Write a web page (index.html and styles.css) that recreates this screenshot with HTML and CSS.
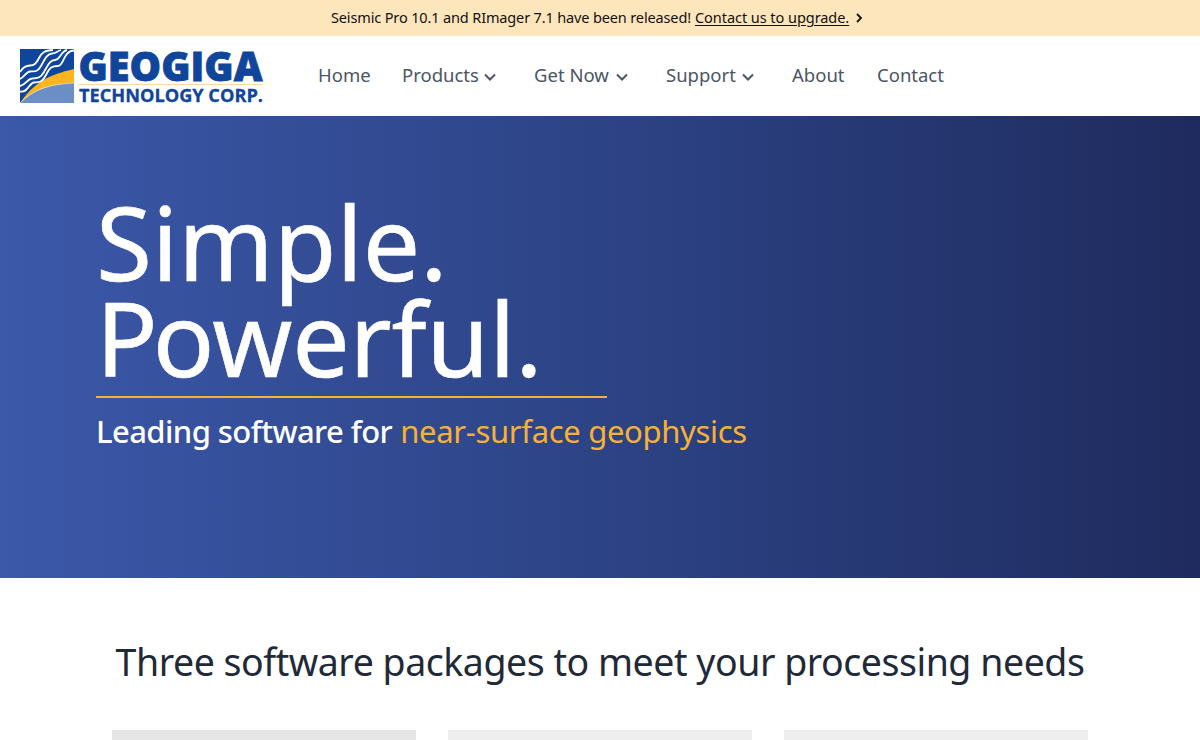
FILE: index.html
```html
<!DOCTYPE html>
<html lang="en">
<head>
    <meta charset="UTF-8">
    <meta name="viewport" content="width=device-width, initial-scale=1.0">
    <title>Geogiga Technology Corp.</title>
    <link rel="stylesheet" href="styles.css">
</head>
<body>
    <div class="banner">
        <span class="banner-text">Seismic Pro 10.1 and RImager 7.1 have been released!</span>
        <a class="banner-link" href="#">Contact us to upgrade.</a>
        <svg class="banner-arrow" viewBox="0 0 8 10" width="8" height="10"><path d="M2 1l4 4-4 4"/></svg>
    </div>

    <header class="header">
        <a class="logo" href="#">
            <svg class="logo-svg" width="248" height="60" viewBox="0 0 248 60">
                <rect x="2" y="3" width="54" height="54" fill="#10459c"/>
                <path d="M2 57C16 43 32 38 56 37V57Z" fill="#6b8fc4"/>
                <path d="M2 57C16 37 30 29 56 23V37C33 38 17 43 2 57Z" fill="#fdb51e"/>
                <path d="M2 57C16 43 32 38 56 37" fill="none" stroke="#dfe4dc" stroke-width="0.8"/>
                <g class="waves">
                    <path d="M2 26C5 21 8 19.5 12 19.5S18 18 21 12S27 4.5 35 4"/>
                    <path d="M2 33C6 31 8 26 12 25.5S19 27 23 20S29 8 34 7.5S39 5 43 4"/>
                    <path d="M2 40C8 39 9 33 14 32.5S22 33 26 26S32 14 37 14S43 5 49 4"/>
                    <path d="M2 45.5C10 47 11 37 16 36.5S24 37 28 29S34 20 40 20S45 5 56 4.5"/>
                </g>
                <path d="M60 38.5H245" stroke="#fbd9a0" stroke-width="1.2"/>
                <text class="logo-name" x="60.5" y="34.5" textLength="184" lengthAdjust="spacingAndGlyphs">GEOGIGA</text>
                <text class="logo-sub" x="61" y="56" textLength="184" lengthAdjust="spacingAndGlyphs">TECHNOLOGY CORP.</text>
            </svg>
        </a>
        <nav class="nav">
            <a class="nav-home" href="#">Home</a>
            <a class="nav-products" href="#">Products <svg class="chevron" viewBox="0 0 12 8" width="12" height="8"><path d="M1 1.5l5 5 5-5"/></svg></a>
            <a class="nav-get" href="#">Get Now <svg class="chevron" viewBox="0 0 12 8" width="12" height="8"><path d="M1 1.5l5 5 5-5"/></svg></a>
            <a class="nav-support" href="#">Support <svg class="chevron" viewBox="0 0 12 8" width="12" height="8"><path d="M1 1.5l5 5 5-5"/></svg></a>
            <a class="nav-about" href="#">About</a>
            <a class="nav-contact" href="#">Contact</a>
        </nav>
    </header>

    <section class="hero">
        <h1>Simple.<br><span class="cap">P</span><span class="line-powerful">owerful.</span></h1>
        <div class="hero-rule"></div>
        <p><span class="lead">Leading software for</span> <span class="accent">near-surface geophysics</span></p>
    </section>

    <section class="packages">
        <h2>Three software packages to meet your processing needs</h2>
        <div class="cards">
            <div class="card card-active"></div>
            <div class="card"></div>
            <div class="card"></div>
        </div>
    </section>
</body>
</html>
```
FILE: styles.css
```css
* {
    margin: 0;
    padding: 0;
    box-sizing: border-box;
}

body {
    font-family: 'Noto Sans', 'Open Sans', sans-serif;
    background: #fff;
    color: #1f2937;
}

a {
    color: inherit;
    text-decoration: none;
}

.banner {
    height: 36px;
    padding: 0 0 2px 331px;
    display: flex;
    align-items: center;
    background: #fee6bc;
    color: #111;
    font-size: 14.5px;
    white-space: nowrap;
}

.banner-text {
    width: 364px;
    letter-spacing: -0.14px;
}

.banner-link {
    width: 154px;
    letter-spacing: -0.05px;
    text-decoration: underline;
    text-underline-offset: 2px;
}

.banner-arrow {
    margin: 2px 0 0 6px;
}

.banner-arrow path {
    fill: none;
    stroke: #111;
    stroke-width: 1.8;
}

.header {
    height: 80px;
    display: flex;
    align-items: center;
    padding-left: 18px;
}

.logo {
    width: 248px;
    height: 60px;
}

.logo-svg {
    display: block;
    overflow: visible;
}

.waves path {
    fill: none;
    stroke: #fff;
    stroke-width: 1.8;
}

.logo-name,
.logo-sub {
    font-family: 'Open Sans', 'Noto Sans', sans-serif;
    font-weight: 800;
    fill: #10459c;
}

.logo-name {
    font-size: 41px;
    stroke: #10459c;
    stroke-width: 0.8;
}

.logo-sub {
    font-size: 17.5px;
    font-weight: 700;
    stroke: #10459c;
    stroke-width: 0.3;
}

.nav {
    display: flex;
    gap: 32px;
    margin: -4px 0 0 52px;
    color: #4b5563;
    font-size: 18.5px;
    white-space: nowrap;
}

.nav a {
    display: flex;
    align-items: center;
    justify-content: space-between;
}

.nav-home { width: 52px; }
.nav-products { width: 94px; margin-right: 6px; }
.nav-get { width: 94px; margin-right: 6px; }
.nav-support { width: 88px; margin-right: 6px; }
.nav-about { width: 53px; }

.chevron {
    margin-top: 5px;
}

.chevron path {
    fill: none;
    stroke: #4b5563;
    stroke-width: 2;
}

.hero {
    height: 462px;
    padding: 78px 96px 0;
    background: linear-gradient(90deg, #3b58a9, #2b4182 55%, #1f2b5e);
    color: #fff;
}

.hero h1 {
    font-size: 102px;
    font-weight: 400;
    line-height: 96px;
    white-space: nowrap;
    -webkit-text-stroke: 0.6px #fff;
}

.cap {
    letter-spacing: -5px;
}

.line-powerful {
    letter-spacing: -0.2px;
}

.hero-rule {
    width: 511px;
    height: 2px;
    margin-top: 10px;
    background: #f8b133;
}

.hero p {
    margin-top: 11px;
    font-size: 31px;
    line-height: 44px;
    white-space: nowrap;
}

.lead {
    font-weight: 500;
    letter-spacing: -0.57px;
}

.accent {
    color: #f8b133;
    letter-spacing: -0.32px;
}

.packages {
    padding: 60px 112px 0;
}

.packages h2 {
    font-size: 37.5px;
    font-weight: 400;
    line-height: 48px;
    letter-spacing: -0.47px;
    text-align: center;
    white-space: nowrap;
}

.cards {
    display: grid;
    grid-template-columns: repeat(3, 1fr);
    gap: 32px;
    margin-top: 44px;
}

.card {
    height: 10px;
    background: #eeeeee;
}

.card-active {
    background: #e6e6e6;
}
```
